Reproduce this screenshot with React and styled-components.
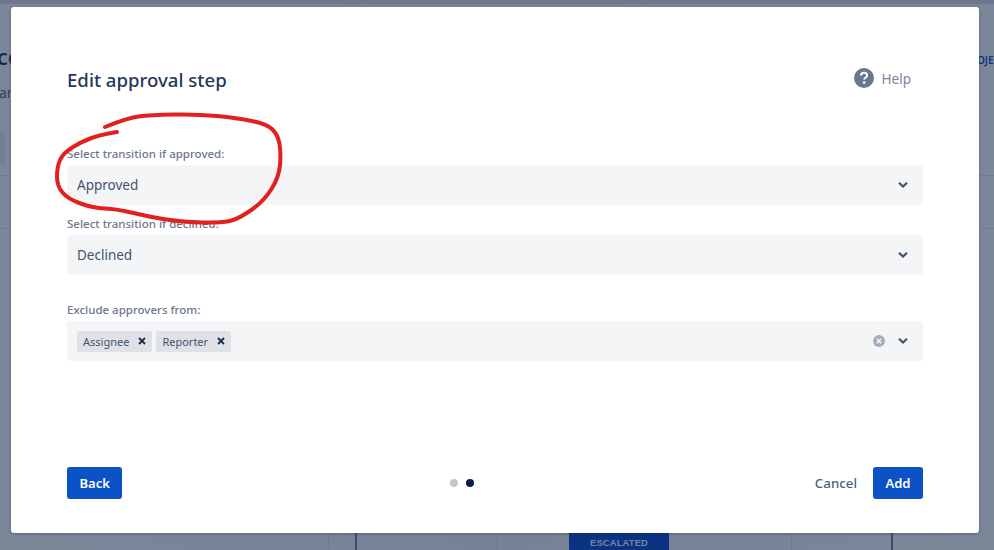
import React from 'react'
import styled, { createGlobalStyle } from 'styled-components'

const GlobalStyle = createGlobalStyle`
  html, body { margin: 0; padding: 0; }
  body { font-family: "Noto Sans", "Open Sans", sans-serif; background: #7a8599; }
`

const Page = styled.div`
  position: relative;
  width: 994px;
  height: 550px;
  box-sizing: border-box;
  padding: 7px 15px 17px 11px;
  overflow: hidden;
  background: linear-gradient(to right, #7b8699, #778297 50%, #7b8699);
`

const TopBand = styled.div`
  position: absolute;
  inset: 0 0 auto 0;
  height: 4px;
  background: #6c7890;
`

const DimLine = styled.div`
  position: absolute;
  left: 0;
  right: 0;
  top: ${p => p.$top}px;
  height: 1px;
  background: #6f7b90;
`

const DimText = styled.span`
  position: absolute;
  top: ${p => p.$top}px;
  left: ${p => p.$left}px;
  font-size: ${p => p.$size}px;
  line-height: 1;
  font-weight: ${p => p.$weight};
  color: ${p => p.$color};
  white-space: nowrap;
`

const DimBox = styled.div`
  position: absolute;
  left: 0;
  top: 133px;
  width: 5px;
  height: 32px;
  background: #727e93;
`

const ColumnRule = styled.div`
  position: absolute;
  bottom: 0;
  top: 533px;
  left: ${p => p.$left}px;
  width: ${p => (p.$dark ? 2 : 1)}px;
  background: ${p => (p.$dark ? '#3c4a6b' : '#6f7b90')};
`

const Escalated = styled.div`
  position: absolute;
  left: 569px;
  top: 533px;
  width: 100px;
  height: 17px;
  padding-top: 5px;
  box-sizing: border-box;
  background: #0a3381;
  color: #7a86a0;
  font-family: "Liberation Sans", sans-serif;
  font-size: 9.3px;
  font-weight: 700;
  letter-spacing: 0.2px;
  text-align: center;
`

const Modal = styled.section`
  position: relative;
  height: 100%;
  box-sizing: border-box;
  display: flex;
  flex-direction: column;
  padding: 0 56px 34px;
  background: #fff;
  border-radius: 3px;
  box-shadow: 0 1px 3px rgba(9, 30, 66, 0.3);
`

const Header = styled.header`
  display: flex;
  align-items: center;
  justify-content: space-between;
  height: 34px;
  margin-top: 55px;
`

const Title = styled.h1`
  margin: 0;
  font-size: 18.6px;
  font-weight: 500;
  color: #253858;
`

const HelpLink = styled.a`
  display: flex;
  align-items: center;
  gap: 7px;
  margin: 0 12px 2px 0;
  font-size: 13.6px;
  color: #7a869a;
`

const Fields = styled.div`
  display: flex;
  flex-direction: column;
  margin-top: 50px;
  flex: 1;
`

const Field = styled.div`
  margin-top: ${p => p.$gap}px;
`

const Label = styled.label`
  display: block;
  height: 16px;
  line-height: 16px;
  margin-bottom: 3px;
  font-size: 11.5px;
  font-weight: 500;
  color: #6b778c;
`

const SelectBox = styled.div`
  display: flex;
  align-items: center;
  height: 40px;
  box-sizing: border-box;
  padding: 0 14px 0 10px;
  background: #f4f5f7;
  border-radius: 3px;
  font-size: 13.5px;
  color: #42526e;
`

const Value = styled.span`
  flex: 1;
`

const Tags = styled.div`
  display: flex;
  flex: 1;
  gap: 4px;
`

const Tag = styled.span`
  display: flex;
  align-items: center;
  gap: 9px;
  height: 21px;
  padding: 0 6px;
  background: #dfe1e6;
  border-radius: 2px;
  font-size: 11px;
  color: #42526e;
`

const Actions = styled.div`
  display: flex;
  align-items: center;
  gap: 12px;
`

const Footer = styled.footer`
  display: flex;
  align-items: center;
  justify-content: space-between;
`

const Button = styled.button`
  height: 32px;
  padding: 0 12.5px;
  border: none;
  border-radius: 3px;
  background: #0b52c7;
  color: #fff;
  font-family: inherit;
  font-size: 13px;
  font-weight: 600;
`

const LinkButton = styled.button`
  height: 32px;
  padding: 0 16px;
  border: none;
  background: none;
  color: #505f79;
  font-family: inherit;
  font-size: 13.3px;
  font-weight: 500;
`

const Dots = styled.div`
  display: flex;
  gap: 8px;
  margin-left: 3px;
`

const Dot = styled.span`
  width: 8px;
  height: 8px;
  border-radius: 50%;
  background: ${p => (p.$active ? '#091e4b' : '#c1c7d0')};
`

const FooterRight = styled.div`
  display: flex;
`

const Scribble = styled.svg`
  position: absolute;
  left: 0;
  top: 0;
  pointer-events: none;
`

const Chevron = () => (
  <svg width="12" height="8" viewBox="0 0 12 8">
    <path d="M2 1.8 L6 5.6 L10 1.8" fill="none" stroke="#42526e" strokeWidth="2.2" />
  </svg>
)

const SmallX = () => (
  <svg width="8" height="8" viewBox="0 0 8 8">
    <path d="M1 1 L7 7 M7 1 L1 7" stroke="#172b4d" strokeWidth="1.8" />
  </svg>
)

const ClearIcon = () => (
  <svg width="12" height="12" viewBox="0 0 12 12">
    <circle cx="6" cy="6" r="6" fill="#a5adba" />
    <path d="M3.8 3.8 L8.2 8.2 M8.2 3.8 L3.8 8.2" stroke="#f4f5f7" strokeWidth="1.6" />
  </svg>
)

const HelpIcon = () => (
  <svg width="20" height="20" viewBox="0 0 20 20">
    <circle cx="10" cy="10" r="10" fill="#6b778c" />
    <path d="M7 7.6 C7 5.8 8.4 4.8 10.1 4.8 C11.9 4.8 13.1 5.9 13.1 7.4 C13.1 9.4 10.2 9.5 10.2 11.6" fill="none" stroke="#fff" strokeWidth="2" />
    <circle cx="10.2" cy="14.6" r="1.3" fill="#fff" />
  </svg>
)

// the red pen circle somebody drew on the screenshot
const scribblePoints = [
  [105, 127], [127, 118], [150, 115], [197, 114], [237, 118], [267, 124], [278, 135], [281, 153],
  [279, 177], [264, 201], [240, 218], [223, 223], [183, 222], [150, 217], [117, 209], [93, 208],
  [68, 199], [57, 186], [57, 167], [63, 153], [83, 141], [100, 135], [117, 132],
]

const smoothPath = pts => {
  let d = `M${pts[0][0]} ${pts[0][1]}`
  for (let i = 1; i < pts.length - 1; i++) {
    const mx = (pts[i][0] + pts[i + 1][0]) / 2
    const my = (pts[i][1] + pts[i + 1][1]) / 2
    d += ` Q${pts[i][0]} ${pts[i][1]} ${mx} ${my}`
  }
  const last = pts[pts.length - 1]
  return d + ` L${last[0]} ${last[1]}`
}

const App = () => {
  return (
    <Page>
      <GlobalStyle />
      <TopBand />
      <DimLine $top={175} />
      <DimLine $top={228} />
      <DimBox />
      <DimText $top={45} $left={-3} $size={22} $weight={500} $color="#12294f">ce</DimText>
      <DimText $top={86} $left={-1} $size={14} $weight={400} $color="#333f5c">an</DimText>
      <DimText $top={55} $left={977} $size={10} $weight={600} $color="#0a3381">OJEC</DimText>
      <ColumnRule $left={328} />
      <ColumnRule $left={355} $dark />
      <ColumnRule $left={496} />
      <ColumnRule $left={791} />
      <ColumnRule $left={891} $dark />
      <Escalated>ESCALATED</Escalated>

      <Modal>
        <Header>
          <Title>Edit approval step</Title>
          <HelpLink><HelpIcon />Help</HelpLink>
        </Header>

        <Fields>
          <Field $gap={0}>
            <Label>Select transition if approved:</Label>
            <SelectBox><Value>Approved</Value><Chevron /></SelectBox>
          </Field>
          <Field $gap={11}>
            <Label>Select transition if declined:</Label>
            <SelectBox><Value>Declined</Value><Chevron /></SelectBox>
          </Field>
          <Field $gap={27}>
            <Label>Exclude approvers from:</Label>
            <SelectBox>
              <Tags>
                <Tag>Assignee <SmallX /></Tag>
                <Tag>Reporter <SmallX /></Tag>
              </Tags>
              <Actions><ClearIcon /><Chevron /></Actions>
            </SelectBox>
          </Field>
        </Fields>

        <Footer>
          <div><Button>Back</Button></div>
          <Dots><Dot /><Dot $active /></Dots>
          <FooterRight>
            <LinkButton>Cancel</LinkButton>
            <Button>Add</Button>
          </FooterRight>
        </Footer>
      </Modal>

      <Scribble width="994" height="550" viewBox="0 0 994 550">
        <path d={smoothPath(scribblePoints)} fill="none" stroke="#e3201f" strokeWidth="4" strokeLinecap="round" strokeLinejoin="round" />
      </Scribble>
    </Page>
  )
}

export default App
